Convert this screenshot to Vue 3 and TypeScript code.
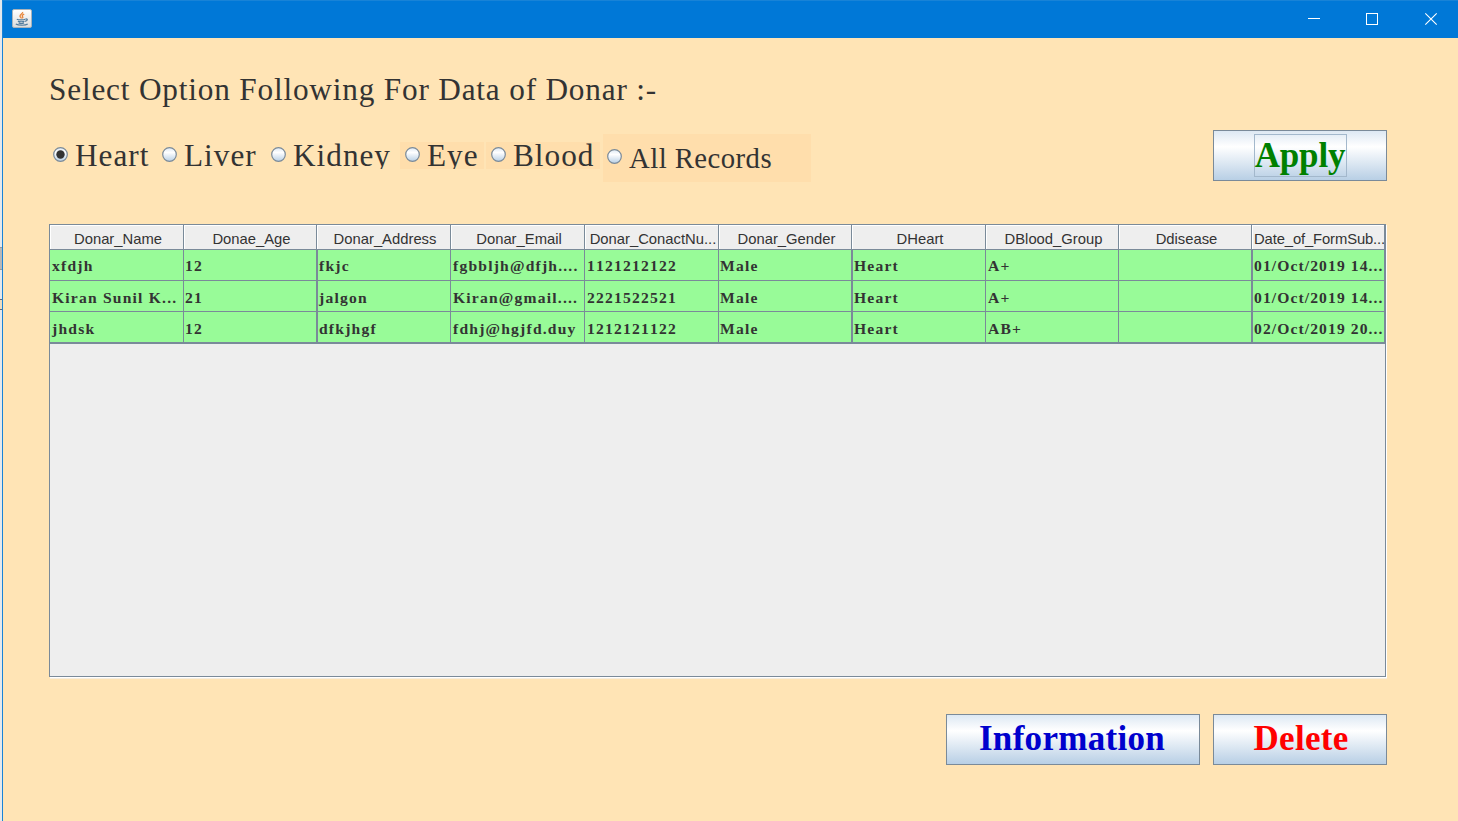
<script setup lang="ts">
import { ref } from 'vue'

interface Option { label: string; cls: string }

const options: Option[] = [
  { label: 'Heart', cls: 'heart' },
  { label: 'Liver', cls: 'liver' },
  { label: 'Kidney', cls: 'kidney' },
  { label: 'Eye', cls: 'eye' },
  { label: 'Blood', cls: 'blood' },
  { label: 'All Records', cls: 'all' },
]
const selected = ref('Heart')

const columns: string[] = [
  'Donar_Name', 'Donae_Age', 'Donar_Address', 'Donar_Email', 'Donar_ConactNu...',
  'Donar_Gender', 'DHeart', 'DBlood_Group', 'Ddisease', 'Date_of_FormSub...',
]
const rows: string[][] = [
  ['xfdjh', '12', 'fkjc', 'fgbbljh@dfjh....', '1121212122', 'Male', 'Heart', 'A+', '', '01/Oct/2019 14...'],
  ['Kiran Sunil K...', '21', 'jalgon', 'Kiran@gmail....', '2221522521', 'Male', 'Heart', 'A+', '', '01/Oct/2019 14...'],
  ['jhdsk', '12', 'dfkjhgf', 'fdhj@hgjfd.duy', '1212121122', 'Male', 'Heart', 'AB+', '', '02/Oct/2019 20...'],
]
const wideLine = (i: number): boolean => i === 2 || i === 6 || i === 9
const tight = (i: number): boolean => i === 1 || i === 5
</script>

<template>
  <div class="screen">
    <div class="behind">
      <div class="patch"></div>
      <div class="sliver"></div>
    </div>
    <div class="window">
      <header class="titlebar">
        <svg class="java" width="20" height="19" viewBox="0 0 20 19">
          <defs>
            <linearGradient id="tile" x1="0" y1="0" x2="0" y2="1">
              <stop offset="0" stop-color="#ffffff" />
              <stop offset="1" stop-color="#dcdcdc" />
            </linearGradient>
          </defs>
          <rect x="0.5" y="0.5" width="19" height="18" rx="1.5" fill="url(#tile)" stroke="#a9b3bb" />
          <path d="M10.6 3c.8 1.500-3 2.600-2.600 4.300.2.900 1.300 1.300 1.500 2.200M12.200 5.200c-2.400 1-2.200 1.800-1.500 2.600.4.500 0 1.100-.4 1.500" fill="none" stroke="#e8853a" stroke-width="1.300" />
          <path d="M4.800 10.200c1.500.8 7.200.8 8.400 0M5.900 12.200c1.500.7 5.200.7 6.600 0M6.600 13.900c1.300.6 4.200.6 5.400 0M3.800 15c2.500 1.700 9.900 1.600 11.900 0M13.400 10c2.600-.4 2.600 1.700-.3 2.400" fill="none" stroke="#537c9d" stroke-width="1.200" />
        </svg>
        <div class="controls">
          <svg width="58" height="37" viewBox="0 0 58 37" shape-rendering="crispEdges"><path d="M23 17.500h12" stroke="#fff" fill="none" /></svg>
          <svg width="58" height="37" viewBox="0 0 58 37" shape-rendering="crispEdges"><rect x="23.500" y="12.500" width="11" height="11" stroke="#fff" fill="none" /></svg>
          <svg width="58" height="37" viewBox="0 0 58 37"><path d="M24.300 12.300l11.400 11.400M35.700 12.300L24.300 23.700" stroke="#fff" stroke-width="1.100" fill="none" /></svg>
        </div>
      </header>

      <main class="content">
        <h1 class="title">Select Option Following For Data of Donar :-</h1>

        <div class="toolbar">
          <div class="options">
            <label
              v-for="o in options"
              :key="o.label"
              class="option"
              :class="o.cls"
              @click="selected = o.label"
            >
              <svg class="radio" width="15" height="15" viewBox="0 0 15 15">
                <defs>
                  <linearGradient :id="'g-' + o.cls" x1="0" y1="0" x2="0" y2="1">
                    <stop offset="0" stop-color="#dde8f3" />
                    <stop offset="0.35" stop-color="#ffffff" />
                    <stop offset="1" stop-color="#b8cfe5" />
                  </linearGradient>
                </defs>
                <circle cx="7.500" cy="7.500" r="6.800" :fill="`url(#g-${o.cls})`" stroke="#7a8a99" stroke-width="1.200" />
                <circle v-if="selected === o.label" cx="7.500" cy="7.500" r="4.200" fill="#333" />
              </svg>
              <span>{{ o.label }}</span>
            </label>
          </div>
          <button class="btn apply"><span>Apply</span></button>
        </div>

        <section class="pane">
          <div class="row head">
            <div v-for="c in columns" :key="c" class="th">{{ c }}</div>
          </div>
          <div v-for="(r, ri) in rows" :key="ri" class="row body">
            <div v-for="(c, ci) in r" :key="ci" class="td" :class="{ wide: wideLine(ci), tight: tight(ci) }">{{ c }}</div>
          </div>
        </section>

        <div class="actions">
          <button class="btn info">Information</button>
          <button class="btn delete">Delete</button>
        </div>
      </main>
    </div>
  </div>
</template>

<style>
body { overflow: hidden; }
</style>

<style scoped>
.screen {
  display: flex;
  width: 1458px;
  height: 821px;
  overflow: hidden;
  color: #333;
  font-family: "Liberation Serif", "Times New Roman", serif;
  font-kerning: none;
  font-variant-ligatures: none;
}
.behind { width: 2px; background: #e4e8ec; padding-top: 247px; box-sizing: border-box; }
.patch { height: 21px; background: #b8b8b8; border-top: 1px solid #999; border-bottom: 1px solid #999; }
.sliver { margin-top: 29px; height: 9px; border-top: 1px solid #667; border-bottom: 1px solid #667; background: #ecdcc0; }
.window { width: 1456px; box-sizing: border-box; border-left: 1px solid #1883d7; background: #ffe4b5; }
.titlebar {
  display: flex;
  justify-content: space-between;
  height: 38px;
  box-sizing: border-box;
  border-top: 1px solid #1883d7;
  background: #0078d7;
}
.java { margin: 8px 0 0 9px; }
.controls { display: flex; margin-right: -1px; }
.content { padding: 0 0 0 46px; }
.title {
  margin: 0;
  padding-top: 34px;
  height: 58px;
  font-size: 31.25px;
  line-height: 36px;
  font-weight: 400;
  letter-spacing: 0.82px;
  white-space: nowrap;
}
.toolbar { display: flex; justify-content: space-between; width: 1338px; height: 94px; }
.options { display: flex; align-items: flex-start; padding-top: 4px; }
.option {
  display: flex;
  box-sizing: border-box;
  height: 27px;
  margin-top: 8px;
  padding-left: 4px;
  gap: 7px;
  overflow: hidden;
  font-size: 31.25px;
  line-height: 28px;
  letter-spacing: 1px;
  white-space: nowrap;
}
.radio { flex: none; margin-top: 5px; }
.heart { width: 109px; }
.liver { width: 109px; }
.kidney { width: 133px; }
.eye { width: 84px; padding-left: 5px; background: #ffdeac; }
.blood { width: 114px; margin-left: 2px; padding-left: 5px; background: #ffdeac; }
.all {
  width: 208px;
  height: 48px;
  margin: 0 0 0 3px;
  background: #ffdeac;
  font-size: 28.75px;
  line-height: 49px;
  letter-spacing: 0.45px;
}
.all .radio { margin-top: 15px; }
.btn {
  box-sizing: border-box;
  width: 174px;
  height: 51px;
  padding: 0;
  border: 1px solid #7a8a99;
  border-radius: 0;
  background: linear-gradient(#dde8f3 0%, #fff 32%, #b8cfe5 100%);
  font: bold 35px/46px "Liberation Serif", "Times New Roman", serif;
  font-kerning: none;
  letter-spacing: 0.3px;
}
.apply {
  display: flex;
  justify-content: center;
  align-items: center;
  color: #008000;
  letter-spacing: -0.15px;
}
.apply span { box-sizing: border-box; width: 93px; height: 43px; line-height: 42px; border: 1px solid #a3b8cc; }
.pane {
  box-sizing: border-box;
  width: 1337px;
  height: 453px;
  border: 1px solid #7a8a99;
  background: #eee;
  box-shadow: 1px 1px 0 #fff, 1px 2px 0 #f6eee0;
}
.row { display: grid; grid-template-columns: 134px 133px 134px 134px 134px 133px 134px 133px 133px 133px; }
.th, .td { box-sizing: border-box; border-right: 1px solid #7a8a99; border-bottom: 1px solid #7a8a99; white-space: nowrap; overflow: hidden; }
.th {
  height: 25px;
  padding: 2px 0 0 3px;
  text-align: center;
  font: 14.8px/24px "Liberation Sans", Arial, sans-serif;
  font-kerning: none;
  box-shadow: inset 1px 1px 0 #fff;
}
.th:last-child { padding-left: 2px; text-align: left; letter-spacing: -0.12px; }
.td {
  height: 31px;
  padding-left: 2px;
  background: #98fb98;
  font-size: 15.6px;
  font-weight: 700;
  line-height: 32px;
  letter-spacing: 1.2px;
}
.td:last-child { letter-spacing: 1.1px; }
.body + .body .td { line-height: 33px; }
.body:last-child .td { height: 32px; border-bottom-width: 2px; }
.wide { padding-left: 1px; border-left: 1px solid #7a8a99; }
.tight { padding-left: 1px; }
.actions { display: flex; gap: 13px; padding: 37px 0 0 897px; }
.actions .btn { padding-bottom: 2px; }
.info { width: 254px; padding-right: 2px; color: #0000cd; }
.delete { padding-left: 2px; color: #f00; }
</style>
